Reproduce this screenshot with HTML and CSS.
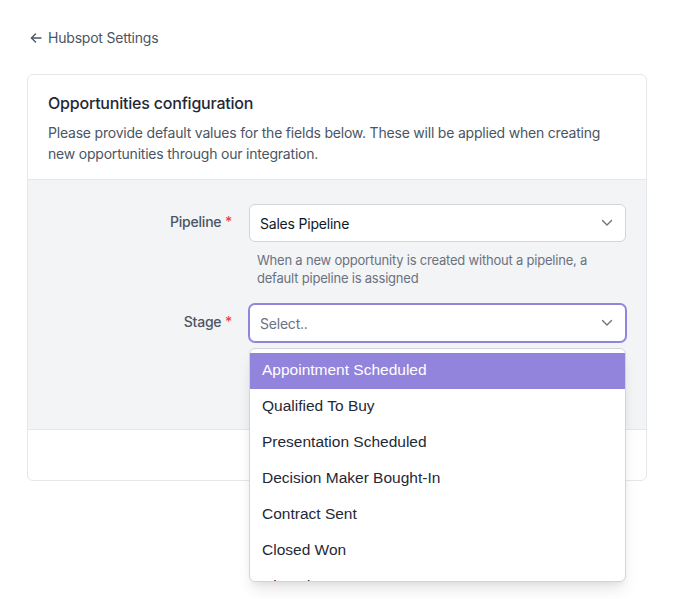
FILE: index.html
```html
<!DOCTYPE html>
<html lang="en">
<head>
  <meta charset="UTF-8">
  <meta name="viewport" content="width=device-width, initial-scale=1.0">
  <title>Opportunities configuration</title>
  <link rel="stylesheet" href="styles.css">
</head>
<body>
  <div class="page">
    <a class="back-link" href="#">
      <svg width="12" height="12" viewBox="0 0 12 12" fill="none" stroke="currentColor" stroke-width="1.4" stroke-linecap="round" stroke-linejoin="round">
        <line x1="11" y1="6" x2="1.5" y2="6"></line>
        <polyline points="5.5 2 1.5 6 5.5 10"></polyline>
      </svg>
      Hubspot Settings
    </a>

    <div class="card">
      <div class="card-header">
        <h2>Opportunities configuration</h2>
        <p>Please provide default values for the fields below. These will be applied when creating new opportunities through our integration.</p>
      </div>

      <div class="card-body">
        <div class="field">
          <label class="field-label">Pipeline <span class="req">*</span></label>
          <div class="field-control">
            <div class="select">
              <span class="select-value">Sales Pipeline</span>
              <svg class="chevron" width="12" height="8" viewBox="0 0 12 8" fill="none" stroke="currentColor" stroke-width="1.4" stroke-linecap="round" stroke-linejoin="round">
                <polyline points="1.5 1.5 6 6 10.5 1.5"></polyline>
              </svg>
            </div>
            <p class="help">When a new opportunity is created without a pipeline, a default pipeline is assigned</p>
          </div>
        </div>

        <div class="field">
          <label class="field-label">Stage <span class="req">*</span></label>
          <div class="field-control">
            <div class="select is-open">
              <span class="select-placeholder">Select..</span>
              <svg class="chevron" width="12" height="8" viewBox="0 0 12 8" fill="none" stroke="currentColor" stroke-width="1.4" stroke-linecap="round" stroke-linejoin="round">
                <polyline points="1.5 1.5 6 6 10.5 1.5"></polyline>
              </svg>
            </div>
            <ul class="menu">
              <li class="option active">Appointment Scheduled</li>
              <li class="option">Qualified To Buy</li>
              <li class="option">Presentation Scheduled</li>
              <li class="option">Decision Maker Bought-In</li>
              <li class="option">Contract Sent</li>
              <li class="option">Closed Won</li>
              <li class="option">Closed Lost</li>
            </ul>
          </div>
        </div>
      </div>

      <div class="card-footer"></div>
    </div>
  </div>
</body>
</html>
```

FILE: styles.css
```css
:root {
  --text: #1f2937;
  --text-muted: #4b5563;
  --text-light: #6b7280;
  --border: #e5e7eb;
  --input-border: #d1d5db;
  --bg-soft: #f3f4f6;
  --purple: #9283dd;
  --danger: #ef4444;
}

* {
  margin: 0;
  padding: 0;
  box-sizing: border-box;
}

html,
body {
  min-height: 100%;
}

body {
  min-height: 599px;
  font-family: Inter, "Noto Sans", sans-serif;
  letter-spacing: -0.013em;
  color: var(--text);
  background: #ffffff;
}

.page {
  min-height: 599px;
  padding: 28px 33px 0 27px;
}

.back-link {
  display: inline-flex;
  align-items: center;
  gap: 6px;
  margin-left: 3px;
  font-size: 14px;
  line-height: 20px;
  color: var(--text-muted);
  text-decoration: none;
}

.card {
  margin-top: 26px;
  border: 1px solid var(--border);
  border-radius: 6px;
  background: #ffffff;
}

.card-header {
  padding: 16px 20px 15px;
  border-bottom: 1px solid var(--border);
}

.card-header h2 {
  font-size: 16px;
  line-height: 24px;
  font-weight: 500;
  color: var(--text);
}

.card-header p {
  margin-top: 7px;
  font-size: 14px;
  line-height: 21px;
  color: var(--text-muted);
}

.card-body {
  background: var(--bg-soft);
  padding: 24px 20px 87px;
  display: flex;
  flex-direction: column;
  gap: 17px;
}

.field {
  display: grid;
  grid-template-columns: 184px 1fr;
  column-gap: 17px;
}

.field-label {
  text-align: right;
  font-size: 14px;
  line-height: 20px;
  font-weight: 500;
  color: var(--text-muted);
  padding-top: 8px;
}

.req {
  color: var(--danger);
}

.field-control {
  position: relative;
}

.select {
  display: flex;
  align-items: center;
  justify-content: space-between;
  height: 38px;
  padding: 0 12px 0 10px;
  background: #ffffff;
  border: 1px solid var(--input-border);
  border-radius: 6px;
  font-size: 14px;
}

.select.is-open {
  border-color: var(--purple);
  box-shadow: 0 0 0 1px var(--purple);
}

.select-value {
  color: #111827;
}

.select-placeholder {
  color: var(--text-light);
}

.chevron {
  color: var(--text-light);
}

.help {
  margin-top: 9px;
  padding-left: 8px;
  font-size: 13px;
  line-height: 18px;
  color: var(--text-light);
}

.menu {
  position: absolute;
  top: 44px;
  left: 0;
  right: 0;
  z-index: 10;
  max-height: 234px;
  overflow: hidden;
  list-style: none;
  padding-top: 4px;
  background: #ffffff;
  border: 1px solid var(--input-border);
  border-radius: 6px;
  box-shadow: 0 10px 15px -3px rgba(0, 0, 0, 0.1), 0 4px 6px -2px rgba(0, 0, 0, 0.05);
}

.option {
  height: 36px;
  line-height: 34px;
  padding: 0 0 2px 12px;
  font-family: "Liberation Sans", Arial, sans-serif;
  font-size: 15.5px;
  letter-spacing: normal;
  color: #1f2937;
}

.option.active {
  background: var(--purple);
  color: #ffffff;
}

.card-footer {
  height: 51px;
  border-top: 1px solid var(--border);
}
```
